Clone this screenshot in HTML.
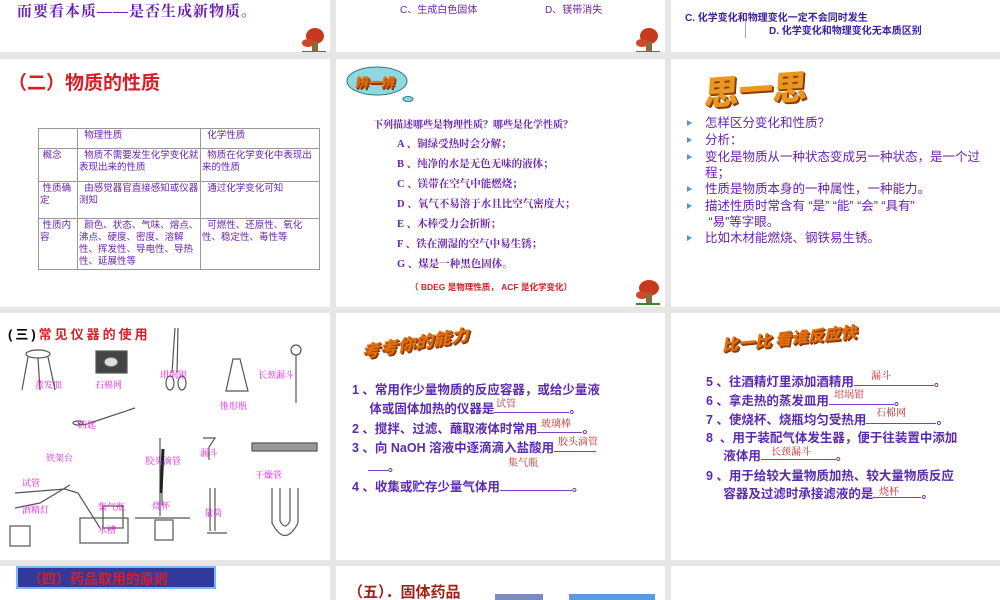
<!DOCTYPE html>
<html><head><meta charset="utf-8"><style>
*{margin:0;padding:0;box-sizing:border-box}
body{width:1000px;height:600px;background:#e6e6e6;position:relative;overflow:hidden;font-family:"Liberation Sans","Noto Sans CJK SC",sans-serif}
.s{position:absolute;background:#fff;overflow:hidden}
.a{position:absolute;white-space:nowrap}
.p{color:#6a22b0}
.serif{font-family:"Liberation Serif","Noto Serif CJK SC",serif}
.red{color:#d81e28}
.mag{color:#e020e0;font-size:9px;font-family:"Noto Serif CJK SC",serif}
.ans{color:#c0282a;font-size:10px;font-family:"Noto Serif CJK SC",serif}
table{border-collapse:collapse;font-size:9.5px;color:#6a22b0;table-layout:fixed}
td{border:1px solid #999;vertical-align:top;padding:1px 1px;line-height:12px}
.wa{font-weight:900;color:#e07010;text-shadow:1px 1px 0 #a04000,2px 2px 0 #803000;font-family:"Noto Sans CJK SC",sans-serif}
.b{position:absolute;font-size:12.5px;color:#6a22b0;line-height:16px}
.b::before{content:"";position:absolute;left:-18px;top:5px;border-left:5px solid #4a9ad0;border-top:3px solid transparent;border-bottom:3px solid transparent}
.q{position:absolute;font-size:12.5px;color:#5a2ab0;font-weight:bold;white-space:nowrap}
.u{display:inline-block;border-bottom:1px solid #7a40c0;height:12px;vertical-align:baseline}
</style></head><body>

<!-- row1 -->
<div class="s" style="left:0;top:0;width:330px;height:52px">
 <div class="a serif p" style="left:17px;top:0;font-size:15px;font-weight:bold;letter-spacing:1px">而要看本质——是否生成新物质。</div>
 <svg class="a" style="left:300px;top:27px" width="28" height="26"><ellipse cx="15" cy="9" rx="9" ry="8" fill="#c8381c"/><ellipse cx="8" cy="16" rx="6" ry="4" fill="#d04828"/><rect x="12" y="14" width="6" height="11" fill="#8a6a3a"/><path d="M2 25 L26 25" stroke="#3a8a2a" stroke-width="2"/></svg>
</div>
<div class="s" style="left:336px;top:0;width:329px;height:52px">
 <div class="a p" style="left:64px;top:1px;font-size:10px">C、生成白色固体</div>
 <div class="a p" style="left:209px;top:1px;font-size:10px">D、镁带消失</div>
 <svg class="a" style="left:298px;top:27px" width="28" height="26"><ellipse cx="15" cy="9" rx="9" ry="8" fill="#c8381c"/><ellipse cx="8" cy="16" rx="6" ry="4" fill="#d04828"/><rect x="12" y="14" width="6" height="11" fill="#8a6a3a"/><path d="M2 25 L26 25" stroke="#3a8a2a" stroke-width="2"/></svg>
</div>
<div class="s" style="left:671px;top:0;width:329px;height:52px">
 <div class="a" style="left:14px;top:9px;font-size:10px;font-weight:bold;color:#4020a0">C. 化学变化和物理变化一定不会同时发生</div>
 <div style="position:absolute;left:74px;top:21px;width:1px;height:17px;background:#aaa"></div>
 <div class="a" style="left:98px;top:22px;font-size:10px;font-weight:bold;color:#4020a0">D. 化学变化和物理变化无本质区别</div>
</div>

<!-- row2 -->
<div class="s" style="left:0;top:59px;width:330px;height:248px">
 <div class="a red" style="left:8px;top:9px;font-size:19px;font-weight:bold">（二）物质的性质</div>
 <table style="position:absolute;left:38px;top:69px;width:282px;height:141px">
  <colgroup><col style="width:39px"><col style="width:123px"><col></colgroup>
  <tr style="height:20px"><td></td><td>&nbsp;&nbsp;物理性质</td><td>&nbsp;&nbsp;化学性质</td></tr>
  <tr style="height:33px"><td>&nbsp;概念</td><td>&nbsp;&nbsp;物质不需要发生化学变化就表现出来的性质</td><td>&nbsp;&nbsp;物质在化学变化中表现出来的性质</td></tr>
  <tr style="height:37px"><td>&nbsp;性质确定</td><td>&nbsp;&nbsp;由感觉器官直接感知或仪器测知</td><td>&nbsp;&nbsp;通过化学变化可知</td></tr>
  <tr><td>&nbsp;性质内容</td><td>&nbsp;&nbsp;颜色、状态、气味、熔点、沸点、硬度、密度、溶解性、挥发性、导电性、导热性、延展性等</td><td>&nbsp;&nbsp;可燃性、还原性、氧化性、稳定性、毒性等</td></tr>
 </table>
</div>
<div class="s" style="left:336px;top:59px;width:329px;height:248px">
 <svg class="a" style="left:8px;top:6px" width="70" height="42"><ellipse cx="33" cy="16" rx="30" ry="14" fill="#8fd8e0" stroke="#2a7a8a"/><ellipse cx="64" cy="34" rx="5" ry="2.5" fill="#8fd8e0" stroke="#2a7a8a"/></svg>
 <div class="a wa" style="left:20px;top:13px;font-size:13px;transform:skewX(-10deg)">辨一辨</div>
 <div class="a serif p" style="left:37px;top:57px;font-size:10px;font-weight:bold">下列描述哪些是物理性质？哪些是化学性质？</div>
 <div class="a serif p" style="left:61px;top:76px;font-size:10.5px;font-weight:bold;line-height:20px">A 、铜绿受热时会分解；<br>B 、纯净的水是无色无味的液体；<br>C 、镁带在空气中能燃烧；<br>D 、氧气不易溶于水且比空气密度大；<br>E 、木棒受力会折断；<br>F 、铁在潮湿的空气中易生锈；<br>G 、煤是一种黑色固体。</div>
 <div class="a red" style="left:74px;top:222px;font-size:8.5px;font-weight:bold">（ BDEG 是物理性质， ACF 是化学变化）</div>
 <svg class="a" style="left:298px;top:220px" width="28" height="26"><ellipse cx="15" cy="9" rx="10" ry="8" fill="#c8381c"/><ellipse cx="8" cy="16" rx="6" ry="4" fill="#d04828"/><rect x="12" y="14" width="6" height="11" fill="#8a6a3a"/><path d="M2 25 L26 25" stroke="#3a8a2a" stroke-width="2"/></svg>
</div>
<div class="s" style="left:671px;top:59px;width:329px;height:248px">
 <div class="a wa" style="left:34px;top:4px;font-size:34px;color:#e89820;transform:skewX(-8deg) rotate(-4deg)">思一思</div>
 <div class="b" style="left:34px;top:56px">怎样区分变化和性质？</div>
 <div class="b" style="left:34px;top:73px">分析：</div>
 <div class="b" style="left:34px;top:90px;width:275px">变化是物质从一种状态变成另一种状态，是一个过程；</div>
 <div class="b" style="left:34px;top:122px">性质是物质本身的一种属性，一种能力。</div>
 <div class="b" style="left:34px;top:139px;width:275px">描述性质时常含有&nbsp;“是”&nbsp;“能”&nbsp;“会”&nbsp;“具有”<br>&nbsp;“易”等字眼。</div>
 <div class="b" style="left:34px;top:171px">比如木材能燃烧、钢铁易生锈。</div>
</div>

<!-- row3 -->
<div class="s" style="left:0;top:313px;width:330px;height:247px">
 <div class="a" style="left:8px;top:11px;font-size:13px;font-weight:bold;letter-spacing:3px">(三)<span class="red">常见仪器的使用</span></div>
 <svg class="a" style="left:0;top:0" width="330" height="247" fill="none" stroke="#555" stroke-width="1.2">
  <ellipse cx="38" cy="41" rx="12" ry="4"/><path d="M28 44 L22 77 M48 44 L55 77 M38 45 L40 77"/>
  <rect x="96" y="38" width="31" height="22" fill="#444"/><ellipse cx="111" cy="49" rx="7" ry="5" fill="#ddd"/>
  <path d="M175 15 L172 60 M178 15 L177 60"/><ellipse cx="170" cy="70" rx="4" ry="7"/><ellipse cx="182" cy="70" rx="4" ry="7"/>
  <path d="M233 46 L240 46 L248 78 L226 78 Z"/>
  <circle cx="296" cy="37" r="5"/><path d="M296 42 L296 90"/>
  <path d="M78 109 Q80 114 90 110 L135 95"/><ellipse cx="78" cy="110" rx="5" ry="2"/>
  <path d="M160 125 L160 203 M135 205 L190 205"/>
  <path d="M163 136 L161 180" stroke-width="3" stroke="#222"/><path d="M162 180 L162 192"/>
  <path d="M203 125 L215 125 L209 134 L209 147"/>
  <rect x="252" y="130" width="65" height="8" fill="#999"/>
  <rect x="10" y="213" width="20" height="20"/><path d="M15 195 L40 190 L70 172"/><path d="M15 180 L65 176 L78 180 L100 215"/>
  <rect x="80" y="205" width="48" height="25"/><rect x="103" y="193" width="20" height="22"/>
  <rect x="155" y="207" width="18" height="20"/>
  <path d="M215 175 L215 218 M207 220 L227 220 M210 175 L210 218"/>
  <path d="M272 175 L272 210 Q285 235 298 210 L298 175 M280 175 L280 208 Q285 218 290 208 L290 175"/>
 </svg>
 <div class="a mag" style="left:35px;top:65px">蒸发皿</div>
 <div class="a mag" style="left:95px;top:65px">石棉网</div>
 <div class="a mag" style="left:160px;top:55px">坩埚钳</div>
 <div class="a mag" style="left:258px;top:55px">长颈漏斗</div>
 <div class="a mag" style="left:220px;top:86px">锥形瓶</div>
 <div class="a mag" style="left:78px;top:105px">药匙</div>
 <div class="a mag" style="left:46px;top:138px">铁架台</div>
 <div class="a mag" style="left:145px;top:141px">胶头滴管</div>
 <div class="a mag" style="left:200px;top:133px">漏斗</div>
 <div class="a mag" style="left:255px;top:155px">干燥管</div>
 <div class="a mag" style="left:22px;top:163px">试管</div>
 <div class="a mag" style="left:22px;top:190px">酒精灯</div>
 <div class="a mag" style="left:98px;top:187px">集气瓶</div>
 <div class="a mag" style="left:152px;top:186px">烧杯</div>
 <div class="a mag" style="left:204px;top:193px">量筒</div>
 <div class="a mag" style="left:98px;top:210px">水槽</div>
</div>
<div class="s" style="left:336px;top:313px;width:329px;height:247px">
 <div class="a wa" style="left:30px;top:16px;font-size:17px;transform:skewX(-20deg) rotate(-10deg)">考考你的能力</div>
 <div class="q" style="left:16px;top:68px;line-height:19px">1 、常用作少量物质的反应容器，或给少量液<br>&nbsp;&nbsp;&nbsp;&nbsp;&nbsp;体或固体加热的仪器是<span class="u" style="width:75px"></span>。</div>
 <div class="q" style="left:16px;top:105px">2 、搅拌、过滤、蘸取液体时常用<span class="u" style="width:45px"></span>。</div>
 <div class="q" style="left:16px;top:124px">3 、向 NaOH 溶液中逐滴滴入盐酸用<span class="u" style="width:42px"></span></div>
 <div class="q" style="left:32px;top:143px"><span class="u" style="width:20px"></span>。</div>
 <div class="q" style="left:16px;top:163px">4 、收集或贮存少量气体用<span class="u" style="width:72px"></span>。</div>
 <div class="a ans" style="left:160px;top:82px">试管</div>
 <div class="a ans" style="left:205px;top:102px">玻璃棒</div>
 <div class="a ans" style="left:222px;top:120px">胶头滴管</div>
 <div class="a ans" style="left:172px;top:141px">集气瓶</div>
</div>
<div class="s" style="left:671px;top:313px;width:329px;height:247px">
 <div class="a wa" style="left:54px;top:12px;font-size:16px;transform:skewX(-15deg) rotate(-6deg)">比一比 看谁反应快</div>
 <div class="q" style="left:35px;top:58px">5 、往酒精灯里添加酒精用<span class="u" style="width:80px"></span>。</div>
 <div class="q" style="left:35px;top:77px">6 、拿走热的蒸发皿用<span class="u" style="width:65px"></span>。</div>
 <div class="q" style="left:35px;top:96px">7 、使烧杯、烧瓶均匀受热用<span class="u" style="width:70px"></span>。</div>
 <div class="q" style="left:35px;top:116px;line-height:18px">8 &nbsp;、用于装配气体发生器，便于往装置中添加<br>&nbsp;&nbsp;&nbsp;&nbsp;&nbsp;液体用<span class="u" style="width:75px"></span>。</div>
 <div class="q" style="left:35px;top:154px;line-height:18px">9 、用于给较大量物质加热、较大量物质反应<br>&nbsp;&nbsp;&nbsp;&nbsp;&nbsp;容器及过滤时承接滤液的是<span class="u" style="width:48px"></span>。</div>
 <div class="a ans" style="left:200px;top:54px">漏斗</div>
 <div class="a ans" style="left:163px;top:73px">坩埚钳</div>
 <div class="a ans" style="left:205px;top:91px">石棉网</div>
 <div class="a ans" style="left:100px;top:130px">长颈漏斗</div>
 <div class="a ans" style="left:208px;top:170px">烧杯</div>
</div>

<!-- row4 -->
<div class="s" style="left:0;top:566px;width:330px;height:34px">
 <div class="a" style="left:16px;top:0;width:200px;height:23px;background:#2f3a9a;border:2px solid #7ab8f0"></div>
 <div class="a red" style="left:28px;top:3px;font-size:14px;font-weight:bold">（四）药品取用的原则</div>
</div>
<div class="s" style="left:336px;top:566px;width:329px;height:34px">
 <div class="a" style="left:12px;top:15px;font-size:15px;font-weight:bold;color:#a02018">（五）．固体药品</div>
 <div class="a" style="left:159px;top:28px;width:48px;height:8px;background:#7a8ac8"></div>
 <div class="a" style="left:233px;top:28px;width:86px;height:8px;background:#5a9ae0"></div>
</div>
<div class="s" style="left:671px;top:566px;width:329px;height:34px"></div>
</body></html>
